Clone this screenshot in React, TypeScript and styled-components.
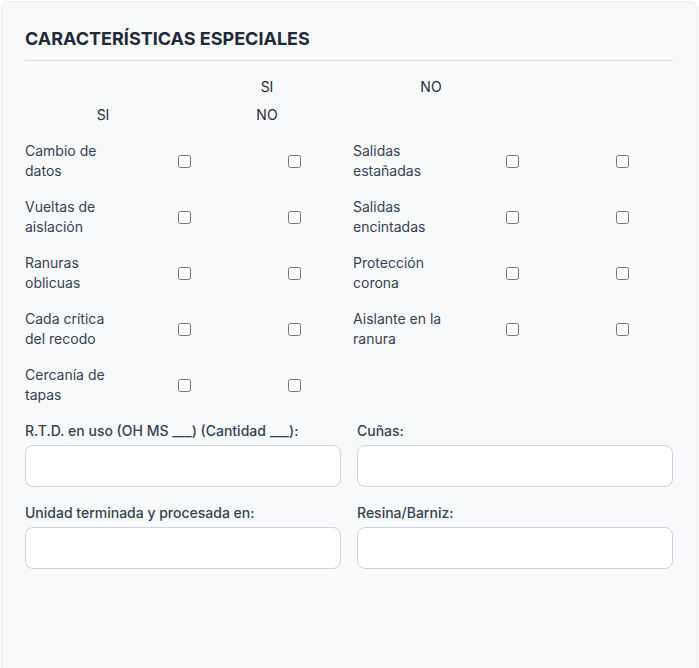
import React from "react";
import styled, { createGlobalStyle } from "styled-components";

const Global = createGlobalStyle`
  html, body { margin: 0; padding: 0; background: #ffffff; }
  body { font-family: Inter, "Noto Sans", sans-serif; }
  * { box-sizing: border-box; }
`;

const Page = styled.div`
  padding: 1px 1px 0 1px;
  height: 668px;
  overflow: hidden;
`;

const Card = styled.section`
  background: #f8f9fb;
  border: 1px solid #eceef2;
  border-radius: 8px;
  padding: 23px 24px 120px 23px;
  min-height: 700px;
`;

const Title = styled.h2`
  margin: 0 0 16px 0;
  font-size: 18px;
  line-height: 28px;
  font-weight: 700;
  color: #1f2937;
  padding-bottom: 7px;
  border-bottom: 1px solid #d9dce1;
`;

const HeaderGrid = styled.div`
  display: grid;
  grid-template-columns: repeat(4, 1fr);
  gap: 8px;
  margin-bottom: 16px;
`;

const HeaderCell = styled.div`
  text-align: center;
  font-size: 14px;
  line-height: 20px;
  color: #1f2937;
  min-height: 20px;
`;

const Items = styled.div`
  display: grid;
  grid-template-columns: repeat(2, 1fr);
  column-gap: 8px;
  row-gap: 16px;
  margin-bottom: 16px;
`;

const Item = styled.div`
  display: grid;
  grid-template-columns: repeat(3, 1fr);
  gap: 8px;
  align-items: center;
`;

const ItemLabel = styled.span`
  font-size: 14px;
  line-height: 20px;
  color: #374151;
`;

const BoxCell = styled.div`
  display: flex;
  justify-content: center;
  align-items: center;
`;

const Check = styled.input.attrs({ type: "checkbox" })`
  margin: 0;
  width: 13px;
  height: 13px;
`;

const Fields = styled.div`
  display: grid;
  grid-template-columns: repeat(2, 1fr);
  column-gap: 16px;
  row-gap: 16px;
`;

const Field = styled.label`
  display: flex;
  flex-direction: column;
  gap: 4px;
`;

const FieldLabel = styled.span`
  font-size: 14px;
  line-height: 20px;
  font-weight: 500;
  color: #374151;
`;

const TextInput = styled.input`
  height: 42px;
  width: 100%;
  border: 1px solid #d1d5db;
  border-radius: 8px;
  background: #ffffff;
  padding: 8px 12px;
  font-family: inherit;
  font-size: 14px;
  outline: none;
`;

const items = [
  "Cambio de datos",
  "Salidas estañadas",
  "Vueltas de aislación",
  "Salidas encintadas",
  "Ranuras oblicuas",
  "Protección corona",
  "Cada crítica del recodo",
  "Aislante en la ranura",
  "Cercanía de tapas",
];

const headers = ["", "SI", "NO", "", "SI", "NO"];

const fields = [
  "R.T.D. en uso (OH MS ___) (Cantidad ___):",
  "Cuñas:",
  "Unidad terminada y procesada en:",
  "Resina/Barniz:",
];

export default function App() {
  return (
    <Page>
      <Global />
      <Card>
        <Title>CARACTERÍSTICAS ESPECIALES</Title>
        <HeaderGrid>
          {headers.map((h, i) => (
            <HeaderCell key={i}>{h}</HeaderCell>
          ))}
        </HeaderGrid>
        <Items>
          {items.map((label) => (
            <Item key={label}>
              <ItemLabel>{label}</ItemLabel>
              <BoxCell>
                <Check />
              </BoxCell>
              <BoxCell>
                <Check />
              </BoxCell>
            </Item>
          ))}
        </Items>
        <Fields>
          {fields.map((f) => (
            <Field key={f}>
              <FieldLabel>{f}</FieldLabel>
              <TextInput type="text" />
            </Field>
          ))}
        </Fields>
      </Card>
    </Page>
  );
}
